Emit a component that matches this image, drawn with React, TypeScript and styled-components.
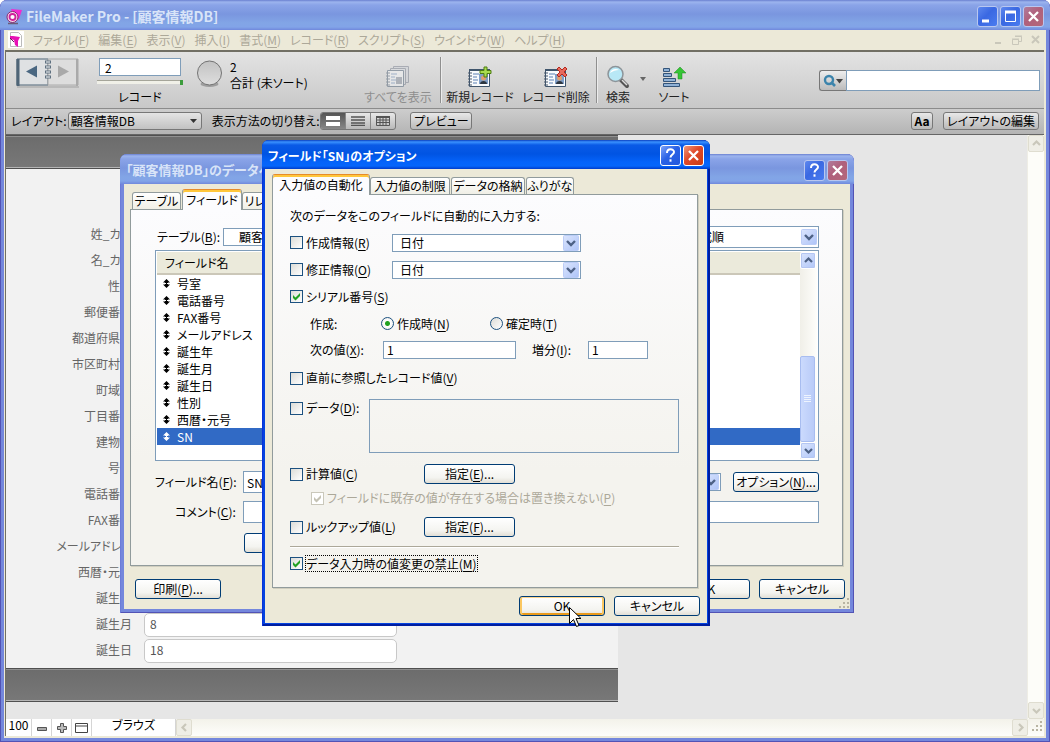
import React from "react";
import styled, { createGlobalStyle, css } from "styled-components";

const GlobalStyle = createGlobalStyle`
  * { box-sizing: border-box; }
  html, body { margin: 0; background: #fff; }
  body, button, input, select, textarea, table {
    font-family: "Noto Sans CJK JP", "Noto Sans", sans-serif;
    font-size: 12px;
    line-height: 16px;
    font-feature-settings: "palt";
    color: #000;
  }
  button, input, select, textarea { margin: 0; padding: 0; border-radius: 0; outline: none; }
  body { overflow: hidden; }
`;

const svgUrl = (w: number, h: number, body: string) =>
  `url("data:image/svg+xml,${encodeURIComponent(
    `<svg xmlns='http://www.w3.org/2000/svg' width='${w}' height='${h}' viewBox='0 0 ${w} ${h}'>${body}</svg>`
  )}")`;

const dropArrow = svgUrl(
  16,
  16,
  "<defs><linearGradient id='g' x2='1' y2='1'><stop stop-color='#dbe5fd'/><stop offset='1' stop-color='#aec4f8'/></linearGradient></defs><rect x='.5' y='.5' width='15' height='15' rx='1' fill='url(#g)' stroke='#bccdf7'/><path d='M4 6l4 4 4-4' fill='none' stroke='#4d6185' stroke-width='2.4'/>"
);
const greenCheck = svgUrl(11, 11, "<path d='M2 4l2.5 2.5L9 2v3L4.500 9.500 2 7z' fill='#21a121'/>");
const greyCheck = svgUrl(11, 11, "<path d='M2 4l2.5 2.5L9 2v3L4.500 9.500 2 7z' fill='#c4c2b4'/>");
const smallArrow = svgUrl(7, 4, "<path d='M0 0h7L3.500 4z' fill='#333'/>");

/* ---------- shared controls ---------- */

const Key = styled.span`
  text-decoration: underline;
  text-underline-offset: 2px;
`;

/* Underlines the access key written in brackets, e.g. "表示(V)". */
const Mnemonic = ({ text }: { text: string }) => {
  const m = text.match(/^(.*\()(\w)(\).*)$/);
  if (!m) return <>{text}</>;
  return (
    <span>
      {m[1]}
      <Key>{m[2]}</Key>
      {m[3]}
    </span>
  );
};

const PushButton = styled.button<{ $w?: number; $default?: boolean }>`
  width: ${(p) => p.$w ?? 86}px;
  height: 20px;
  flex: none;
  border: 1px solid #003c74;
  border-radius: 3px;
  background: linear-gradient(#fff, #f4f4f0 70%, #e2dfd6);
  line-height: 16px;
  white-space: nowrap;
  ${(p) => p.$default && css`box-shadow: inset 0 1px #fdd58c, inset 2px 0 #fbc761, inset -2px 0 #fbc761, inset 0 -2px #e99a1b;`}
`;

const TextInput = styled.input<{ $w?: number; $h?: number }>`
  ${(p) => (p.$w ? `width: ${p.$w}px;` : "flex: 1; min-width: 0;")}
  height: ${(p) => p.$h ?? 18}px;
  border: 1px solid #7f9db9;
  background: #fff;
  padding: 0 3px;
`;

const DropDown = styled.select<{ $w: number; $h?: number; $pad?: number }>`
  appearance: none;
  width: ${(p) => p.$w}px;
  height: ${(p) => p.$h ?? 18}px;
  flex: none;
  border: 1px solid #7f9db9;
  background: ${dropArrow} right 1px center no-repeat, #fff;
  padding: 0 20px 0 ${(p) => p.$pad ?? 7}px;
`;

const Tick = styled.input`
  appearance: none;
  width: 13px;
  height: 13px;
  flex: none;
  border: 1px solid #1c5180;
  background: linear-gradient(135deg, #dcdcd7, #fff);
  &:checked { background: ${greenCheck} center no-repeat, linear-gradient(135deg, #dcdcd7, #fff); }
  &:disabled { border-color: #cac8bb; background: ${greyCheck} center no-repeat, #fff; }
`;

const Radio = styled.input`
  appearance: none;
  width: 13px;
  height: 13px;
  flex: none;
  border: 1px solid #1c5180;
  border-radius: 50%;
  background: linear-gradient(135deg, #dcdcd7, #fff);
  &:checked { background: radial-gradient(circle, #21a121 0 2px, #fff 3px, #e8e8e4); }
`;

const Choice = styled.label<{ $w?: number; $muted?: boolean; $focus?: boolean }>`
  display: flex;
  align-items: center;
  gap: 3px;
  height: 18px;
  flex: none;
  white-space: nowrap;
  ${(p) => p.$w && `width: ${p.$w}px;`}
  ${(p) => p.$muted && "color: #aca899;"}
  ${(p) => p.$focus && "& > span { outline: 1px dotted #000; line-height: 15px; }"}
`;

const Caption = styled.label<{ $w?: number }>`
  flex: none;
  white-space: nowrap;
  ${(p) => p.$w && `width: ${p.$w}px;`}
`;

/* ---------- window chrome ---------- */

const TitleBar = styled.header<{ $active?: boolean; $h: number }>`
  height: ${(p) => p.$h}px;
  flex: none;
  display: flex;
  align-items: center;
  gap: 2px;
  padding: 2px 6px 0 6px;
  border-radius: 7px 7px 0 0;
  color: ${(p) => (p.$active ? "#fff" : "#d8e4f8")};
  background: ${(p) =>
    p.$active
      ? "linear-gradient(#0a3fc0 0, #3a92ff 2px, #0a5ae6 5px, #0054e3 14px, #0463fa 22px, #0566fb 26px, #003ccb 29px)"
      : "linear-gradient(#6a80d0 0, #9cb4ee 2px, #8aa4e8 5px, #7a96df 14px, #82a5e6 23px, #82a4e8 27px, #7088dc 30px)"};
`;

const TitleText = styled.h1<{ $size?: number }>`
  flex: 1;
  margin: 0;
  font-size: ${(p) => p.$size ?? 12}px;
  line-height: 20px;
  font-weight: 700;
  white-space: nowrap;
`;

const CaptionButton = styled.button<{ $tone: "blue" | "red"; $active?: boolean }>`
  width: 21px;
  height: 21px;
  flex: none;
  display: grid;
  place-items: center;
  border: 1px solid ${(p) => (p.$active ? "#fff" : "#b9c7f0")};
  border-radius: 3px;
  background: ${(p) =>
    p.$tone === "blue"
      ? p.$active
        ? "linear-gradient(135deg, #7ea4f8, #2a62e6 45%, #2458dc)"
        : "linear-gradient(135deg, #5e88ee, #3a68e2 45%, #4a7cf0)"
      : p.$active
        ? "linear-gradient(135deg, #f0987a, #e0492a 45%, #c93c14)"
        : "linear-gradient(135deg, #b07c9c, #b0607c 45%, #b4687a)"};
`;

const Glyph = ({ kind }: { kind: "min" | "max" | "close" | "help" }) => (
  <svg width="15" height="15" viewBox="0 0 15 15" fill="none" stroke="#fff">
    {kind === "min" && <path d="M2 12h7" strokeWidth="3" />}
    {kind === "max" && (
      <>
        <path d="M2 3h11" strokeWidth="3" />
        <path d="M2.500 3v9.500h10V3" />
      </>
    )}
    {kind === "close" && <path d="M3 3l9 9M12 3l-9 9" strokeWidth="2.300" />}
    {kind === "help" && (
      <>
        <path d="M4 5c0-5 7-4.500 7-1 0 2.500-3.500 2.500-3.500 5.500" strokeWidth="2" />
        <path d="M6.500 12.500h2" strokeWidth="2.400" />
      </>
    )}
  </svg>
);

const MainWindow = styled.div`
  position: relative;
  display: flex;
  flex-direction: column;
  min-height: 100vh;
  border-radius: 7px 7px 0 0;
  background: #7487dc;
  box-shadow: inset 1px 0 #5253b5, inset -1px 0 #5253b5, inset 0 -1px #5253b5;
  overflow: hidden;
`;

const MainBody = styled.div`
  flex: 1;
  display: flex;
  flex-direction: column;
  margin: 0 4px 4px;
  background: #ece9d8;
`;

const MenuBar = styled.nav`
  display: flex;
  align-items: center;
  gap: 9px;
  height: 19px;
  flex: none;
  padding: 0 4px;
`;

const MenuItem = styled.button`
  border: 0;
  background: none;
  color: #aca899;
  white-space: nowrap;
`;

const ChildControls = styled.div`
  display: flex;
  gap: 7px;
  margin-left: auto;
`;

const Client = styled.div`
  flex: 1;
  display: flex;
  flex-direction: column;
  margin: 1px 2px 2px 1px;
  border: 1px solid #716f64;
  border-width: 2px 0 0 1px;
`;

/* ---------- toolbar ---------- */

const Toolbar = styled.div`
  display: flex;
  align-items: flex-start;
  height: 57px;
  flex: none;
  padding: 5px 4px 0 10px;
  background: linear-gradient(#e3e3e3, #c8c8c8);
  border-bottom: 1px solid #8b8b8b;
`;

const BookButton = styled.button`
  width: 64px;
  height: 32px;
  flex: none;
  border: 0;
  background: none;
`;

const RecordBox = styled.div`
  display: flex;
  flex-direction: column;
  align-items: center;
  width: 88px;
  margin-left: 16px;
  padding-top: 1px;
`;

const RecordInput = styled(TextInput)`
  flex: none;
  padding-left: 5px;
`;

const Slider = styled.input`
  appearance: none;
  width: 86px;
  height: 4px;
  margin: 4px 0 5px;
  background: #f0f0e8;
  border-top: 1px solid #a5a59a;
  &::-webkit-slider-thumb {
    appearance: none;
    width: 3px;
    height: 5px;
    background: #3c9c3c;
  }
`;

const FoundSet = styled.div`
  display: flex;
  gap: 7px;
  margin: 2px 0 0 12px;
  width: 162px;
  white-space: nowrap;
`;

const ToolButton = styled.button<{ $w: number; $muted?: boolean }>`
  display: flex;
  flex-direction: column;
  align-items: center;
  width: ${(p) => p.$w}px;
  flex: none;
  padding-top: 8px;
  border: 0;
  background: none;
  white-space: nowrap;
  color: ${(p) => (p.$muted ? "#8e8e8e" : "#222")};
`;

const ToolRule = styled.span`
  width: 2px;
  height: 46px;
  flex: none;
  margin: 0 2px;
  background: linear-gradient(90deg, #8f8f8f 50%, #ececec 50%);
`;

const SearchBox = styled.div`
  display: flex;
  flex: none;
  width: 221px;
  margin: 13px 0 0 auto;
`;

const SearchMenu = styled.button`
  display: grid;
  place-items: center;
  width: 27px;
  height: 21px;
  border: 1px solid #777;
  border-right: 0;
  border-radius: 3px 0 0 3px;
  background: linear-gradient(#eee, #bbb);
`;

const LayoutBar = styled.div`
  display: flex;
  align-items: center;
  height: 26px;
  flex: none;
  padding: 0 5px 1px 5px;
  background: linear-gradient(#cdcdcd, #b4b4b4);
  border-bottom: 1px solid #666;
  white-space: nowrap;
`;

const metal = css`
  height: 18px;
  flex: none;
  border: 1px solid #777;
  border-radius: 3px;
  background: linear-gradient(#e8e8e8, #b9b9b9);
`;

const LayoutSelect = styled.select`
  ${metal}
  appearance: none;
  width: 134px;
  margin-left: 1px;
  padding: 0 16px 0 2px;
  background: ${smallArrow} right 4px center no-repeat, linear-gradient(#e4e4e4, #c2c2c2);
`;

const MetalButton = styled.button<{ $w: number }>`
  ${metal}
  width: ${(p) => p.$w}px;
  line-height: 16px;
  white-space: nowrap;
`;

const Segments = styled.div`
  ${metal}
  display: flex;
  width: 76px;
  overflow: hidden;
  margin: 0 14px 0 1px;
`;

const Segment = styled.button<{ $on?: boolean }>`
  flex: 1;
  display: grid;
  place-items: center;
  border: 0;
  border-right: 1px solid #888;
  background: ${(p) => (p.$on ? "linear-gradient(#555, #888)" : "none")};
  &:last-child { border-right: 0; }
`;

const Spacer = styled.span<{ $w?: number }>`
  ${(p) => (p.$w ? `width: ${p.$w}px; flex: none;` : "flex: 1;")}
`;

/* ---------- record form ---------- */

const Workspace = styled.div`
  flex: 1;
  display: flex;
  background: #e6e6e6;
`;

const Sheet = styled.main`
  width: 612px;
  display: flex;
  flex-direction: column;
  background: #e6e6e6;
`;

const Band = styled.div`
  height: 34px;
  flex: none;
  background: linear-gradient(#6c6c6c, #787878);
  border: 1px solid #505050;
  border-width: 1px 0;
  box-shadow: inset 0 -1px #b5b5b5, inset 0 1px #909090;
`;

const RecordForm = styled.form`
  flex: none;
  height: 499px;
  padding-top: 52px;
  background: #f2f2f2;
`;

const RecordRow = styled.label`
  display: flex;
  align-items: center;
  height: 26px;
  color: #666;
`;

const RecordLabel = styled.span`
  width: 126px;
  text-align: right;
  white-space: nowrap;
`;

const RecordField = styled.input`
  width: 253px;
  height: 24px;
  margin: 2px 0 0 12px;
  padding: 0 5px 4px;
  border: 1px solid #c8c8c8;
  border-radius: 5px;
  background: #fff;
  color: #555;
`;

const ScrollColumn = styled.div`
  display: flex;
  flex-direction: column;
  justify-content: space-between;
  width: 17px;
  margin-left: auto;
  background: #fdfdf9;
  border-left: 1px solid #eeede5;
`;

const ScrollEnd = styled.button<{ $blue?: boolean }>`
  display: grid;
  place-items: center;
  width: 16px;
  height: 17px;
  flex: none;
  border: 1px solid ${(p) => (p.$blue ? "#fff" : "#dfddd0")};
  border-radius: 2px;
  background: ${(p) => (p.$blue ? "linear-gradient(135deg, #dbe5fd, #b0c6f8)" : "#efeee6")};
  ${(p) => p.$blue && "box-shadow: inset 0 0 0 1px #b4c6f2;"}
`;

const Chevron = ({ dir, color = "#c9c7ba" }: { dir: "up" | "down" | "left" | "right"; color?: string }) => {
  const d = { up: "M2 7l3.500-3.500L9 7", down: "M2 4l3.500 3.500L9 4", left: "M7 2L3.500 5.500 7 9", right: "M4 2l3.500 3.500L4 9" }[dir];
  return (
    <svg width="11" height="11" viewBox="0 0 11 11">
      <path d={d} fill="none" stroke={color} strokeWidth="2.200" />
    </svg>
  );
};

const StatusBar = styled.footer`
  display: flex;
  height: 17px;
  flex: none;
  background: linear-gradient(#f3f2ea, #fefefb);
`;

const StatusCell = styled.button<{ $w: number; $text?: boolean }>`
  display: grid;
  place-items: ${(p) => (p.$text ? "start center" : "center")};
  width: ${(p) => p.$w}px;
  flex: none;
  border: 0;
  border-right: 1px solid #d5d5d5;
  background: #fff;
  line-height: 12px;
`;

const Grip = () => (
  <svg width="14" height="14" viewBox="0 0 14 14" fill="#b8b4a2">
    <path d="M10 2h2v2h-2zM6 6h2v2H6zM10 6h2v2h-2zM2 10h2v2H2zM6 10h2v2H6zM10 10h2v2h-2z" />
  </svg>
);

/* ---------- dialogs ---------- */

const Dialog = styled.section<{ $x: number; $y: number; $w: number; $active?: boolean }>`
  position: absolute;
  isolation: isolate;
  left: ${(p) => p.$x}px;
  top: ${(p) => p.$y}px;
  width: ${(p) => p.$w}px;
  border-radius: 7px 7px 0 0;
  background: ${(p) => (p.$active ? "#0443e0" : "#7487dc")};
  box-shadow: ${(p) =>
    p.$active
      ? "inset 1px 0 #0831d9, inset -2px 0 #001ea0, inset 0 -2px #001ea0"
      : "inset 1px 0 #6c7cd8, inset -1px 0 #5253b5, inset 0 -1px #5253b5"};
`;

const DialogBody = styled.div<{ $side: number; $pad: string }>`
  display: flow-root;
  margin: 0 ${(p) => p.$side}px;
  padding: ${(p) => p.$pad};
  background: #ece9d8;
`;

const DialogFoot = styled.div<{ $h: number }>`
  height: ${(p) => p.$h}px;
`;

const Tabs = styled.div`
  position: relative;
  z-index: 1;
  display: flex;
  align-items: flex-end;
  height: 20px;
  padding-left: 2px;
`;

const Tab = styled.button<{ $w: number; $on?: boolean }>`
  width: ${(p) => p.$w}px;
  height: ${(p) => (p.$on ? 21 : 17)}px;
  flex: none;
  border: 1px solid #919b9c;
  border-bottom: 0;
  border-radius: 3px 3px 0 0;
  background: linear-gradient(#fff, #f0efe6);
  white-space: nowrap;
  line-height: 16px;
  & + & { margin-left: 1px; }
  ${(p) =>
    p.$on &&
    css`
      && { margin: 0 -1px -1px -2px; }
      border-top: 1px solid #e68b2c;
      box-shadow: inset 0 2px #ffc73c;
      background: #fcfcfe;
    `}
`;

const Panel = styled.div<{ $h: number; $pad: string }>`
  min-height: ${(p) => p.$h}px;
  margin-right: 2px;
  padding: ${(p) => p.$pad};
  border: 1px solid #919b9c;
  background: linear-gradient(#fcfcfe, #f4f3ee 70%);
  box-shadow: 1px 1px #d0cebf;
`;

const Row = styled.div<{ $h: number; $indent?: number; $top?: boolean }>`
  display: flex;
  align-items: ${(p) => (p.$top ? "flex-start" : "center")};
  height: ${(p) => p.$h}px;
  padding-top: ${(p) => (p.$top ? 5 : 0)}px;
  padding-left: ${(p) => p.$indent ?? 0}px;
  white-space: nowrap;
`;

const Memo = styled.textarea`
  width: 310px;
  height: 54px;
  resize: none;
  border: 1px solid #7f9db9;
  background: transparent;
`;

const Divider = styled.hr`
  height: 2px;
  margin: 0;
  border: 0;
  border-top: 1px solid #aca899;
  background: #fff;
`;

const ButtonRow = styled.div<{ $pad: string }>`
  display: flex;
  gap: 9px;
  justify-content: flex-end;
  padding: ${(p) => p.$pad};
`;

const ListFrame = styled.div`
  display: flex;
  height: 211px;
  border: 1px solid #7f9db9;
  padding: 1px;
  background: #fff;
`;

const FieldTable = styled.table`
  flex: 1;
  align-self: flex-start;
  border-collapse: collapse;
  th {
    height: 22px;
    padding: 0 0 0 8px;
    text-align: left;
    font-weight: 400;
    background: #ebeadb;
    border-bottom: 2px solid #cbc7b8;
  }
  td { padding: 0; }
`;

const FieldRow = styled.tr<{ $on?: boolean }>`
  height: 17px;
  background: ${(p) => (p.$on ? "#316ac5" : "#fff")};
  color: ${(p) => (p.$on ? "#fff" : "#000")};
`;

const FieldCell = styled.div`
  display: flex;
  align-items: center;
  gap: 7px;
  height: 17px;
  padding-left: 6px;
`;

const ListScroll = styled.div`
  display: flex;
  flex-direction: column;
  width: 17px;
  background: linear-gradient(90deg, #f0efe8, #fefefb);
`;

const Thumb = styled.div`
  display: grid;
  place-items: center;
  width: 15px;
  height: 86px;
  margin-top: auto;
  border: 1px solid #a8bdf0;
  border-radius: 2px;
  background: linear-gradient(90deg, #cbdafd, #b9cbf8);
`;

const DialogGrip = styled.span`
  position: absolute;
  right: 3px;
  bottom: 3px;
  height: 14px;
`;

const Pointer = styled.svg`
  position: absolute;
  left: 569px;
  top: 607px;
`;

/* ---------- icons ---------- */

const AppIcon = () => (
  <svg width="18" height="17" viewBox="0 0 18 17">
    <path d="M5 1l11 1-3 9-4 2z" fill="#f22ad0" />
    <circle cx="6.500" cy="9" r="5.500" fill="#f6d9ee" stroke="#8a2870" />
    <circle cx="6.500" cy="9" r="3" fill="#fff" stroke="#d0219c" strokeWidth="1.800" />
    <path d="M2 15.500h10" stroke="#6b5a78" strokeWidth="1.500" />
  </svg>
);

const DocIcon = () => (
  <svg width="16" height="17" viewBox="0 0 16 17">
    <path d="M0 0h16v17H0z" fill="#fff" />
    <path d="M2.500 1.500h8l3 3v11h-11z" fill="#fff" stroke="#bbb" />
    <path d="M2 5h3l7 1-2 4v6l-3-2-1-5-4-1z" fill="#e712b4" />
    <path d="M2 7l4 4" stroke="#6a1160" />
  </svg>
);

const Book = () => (
  <svg width="64" height="32" viewBox="0 0 64 32">
    <path d="M1 29h62v2H1z" fill="#a8a8a8" opacity=".6" />
    <path d="M1 2h31v26H1z" fill="#dfe1e3" stroke="#4f6577" />
    <path d="M2 2v27" stroke="#4f6577" strokeWidth="3" />
    <path d="M32 2h30v26H32z" fill="#ddd" stroke="#aaa" />
    <path d="M61 2v27" stroke="#aaa" strokeWidth="2" />
    <path d="M10 14.500l11-6v12z" fill="#4a6781" />
    <path d="M53 14.500l-11-6v12z" fill="#a9a9a9" />
    <path d="M29 5h6M29 10h6M29 15h6M29 20h6" stroke="#5e7080" strokeWidth="3" />
    <path d="M30 5h4M30 10h4M30 15h4M30 20h4" stroke="#fff" />
  </svg>
);

const Pie = () => (
  <svg width="27" height="29" viewBox="0 0 27 29">
    <defs>
      <linearGradient id="pie" x2="0" y2="1">
        <stop stopColor="#c2c2c2" />
        <stop offset="1" stopColor="#dedede" />
      </linearGradient>
    </defs>
    <ellipse cx="13.500" cy="25" rx="9" ry="3" fill="#888" opacity=".7" />
    <circle cx="13.500" cy="14" r="12" fill="url(#pie)" stroke="#737373" />
  </svg>
);

const RecordIcon = ({ kind }: { kind: "all" | "new" | "delete" }) => (
  <svg width="26" height="24" viewBox="0 0 26 24" opacity={kind === "all" ? 0.45 : 1}>
    {kind === "all" && (
      <>
        <path d="M8.500 1.500h15v16h-15z" fill="#ccd0d8" stroke="#6c7484" />
        <path d="M5.500 3.500h15v16h-15z" fill="#d8dce2" stroke="#6c7484" />
      </>
    )}
    <path d={kind === "all" ? "M2.500 5.500h16v16h-16z" : "M2.500 4.500h20v17h-20z"} fill="#f8fafc" stroke="#3f556c" />
    {kind !== "all" && <path d="M2 5h21" stroke="#3f556c" strokeWidth="2" />}
    <path d="M1 8h4M1 11h4M1 14h4M1 17h4M1 20h4" stroke="#46566a" />
    <path d="M6 9h6M6 12h4M6 15h5M6 18h4" stroke="#8fa9cc" strokeWidth="1.500" />
    {kind === "all" ? (
      <path d="M11 12h6v7h-6z" fill="#7d8797" />
    ) : (
      <>
        <path d="M12 9h9v10h-9z" fill="#7f9fc8" />
        <circle cx="16.500" cy="13" r="2.500" fill="#e0a070" />
        <path d="M13 19c0-4 7-4 7 0z" fill="#2c3540" />
      </>
    )}
    {kind === "new" && <path d="M17 2h3v3.500h4v3h-4V12h-3V8.500h-4v-3h4z" fill="#a9dc4e" stroke="#4d7d12" />}
    {kind === "delete" && <path d="M14 4l2-2 3 3 3-3 2 2-3 3 3 3-2 2-3-3-3 3-2-2 3-3z" fill="#e86a5c" stroke="#b5281d" />}
  </svg>
);

const FindIcon = () => (
  <svg width="24" height="24" viewBox="0 0 24 24">
    <path d="M14 14l7 7" stroke="#555" strokeWidth="4" strokeLinecap="round" />
    <path d="M16 15l5 5" stroke="#ddd" strokeWidth="1.500" />
    <circle cx="9.500" cy="9" r="7.500" fill="#b8e8f6" stroke="#8d9499" strokeWidth="1.500" />
    <path d="M4 8c1-4 6-5 9-3-3 0-6 1-9 3z" fill="#fff" />
  </svg>
);

const SortIcon = () => (
  <svg width="26" height="24" viewBox="0 0 26 24">
    <g fill="#8fb1d6" stroke="#34557a">
      <path d="M2.500 3.500h6v3h-6zM2.500 8.500h8v3h-8zM2.500 13.500h12v3h-12zM2.500 18.500h16v3h-16z" />
    </g>
    <path d="M19 2l6 6h-4v6h-4V8h-4z" fill="#35c435" stroke="#1d8a1d" strokeWidth=".5" />
  </svg>
);

const menus = ["ファイル(F)", "編集(E)", "表示(V)", "挿入(I)", "書式(M)", "レコード(R)", "スクリプト(S)", "ウインドウ(W)", "ヘルプ(H)"];

const recordFields: [string, string][] = [
  ["姓_カナ", ""], ["名_カナ", ""], ["性別", ""], ["郵便番号", ""], ["都道府県名", ""], ["市区町村名", ""],
  ["町域名", ""], ["丁目番地", ""], ["建物名", ""], ["号室", ""], ["電話番号", ""], ["FAX番号", ""],
  ["メールアドレス", ""], ["西暦・元号", ""], ["誕生年", ""], ["誕生月", "8"], ["誕生日", "18"],
];

const dbFields = ["号室", "電話番号", "FAX番号", "メールアドレス", "誕生年", "誕生月", "誕生日", "性別", "西暦・元号", "SN"];

const DatabaseDialog = () => (
  <Dialog $x={120} $y={154} $w={734}>
    <TitleBar $h={30}>
      <TitleText $size={13}>「顧客情報DB」のデータベースの管理</TitleText>
      <CaptionButton $tone="blue" aria-label="ヘルプ"><Glyph kind="help" /></CaptionButton>
      <CaptionButton $tone="red" aria-label="閉じる"><Glyph kind="close" /></CaptionButton>
    </TitleBar>
    <DialogBody $side={4} $pad="5px 5px 0 6px">
      <Tabs>
        <Tab $w={49}>テーブル</Tab>
        <Tab $w={60} $on>フィールド</Tab>
        <Tab $w={68}>リレーション</Tab>
      </Tabs>
      <Panel $h={357} $pad="13px 23px 0 24px">
        <Row $h={27} $indent={2}>
          <Caption $w={66} htmlFor="table"><Mnemonic text="テーブル(B):" /></Caption>
          <DropDown id="table" $w={200} $pad={15}><option>顧客情報DB</option></DropDown>
          <Spacer />
          <DropDown aria-label="表示順" $w={148} $h={22} $pad={16}><option>作成順</option></DropDown>
        </Row>
        <ListFrame>
          <FieldTable>
            <thead><tr><th>フィールド名</th></tr></thead>
            <tbody>
              {dbFields.map((f) => (
                <FieldRow key={f} $on={f === "SN"}>
                  <td>
                    <FieldCell>
                      <svg width="7" height="9" viewBox="0 0 7 9" fill="currentColor">
                        <path d="M3.500 0L7 3.500H5v2h2L3.500 9 0 5.500h2v-2H0z" />
                        <path d="M0 4h7v1H0z" fill={f === "SN" ? "#316ac5" : "#fff"} />
                        <path d="M3 2h1v5H3z" />
                      </svg>
                      {f}
                    </FieldCell>
                  </td>
                </FieldRow>
              ))}
            </tbody>
          </FieldTable>
          <ListScroll>
            <ScrollEnd $blue aria-label="上へ"><Chevron dir="up" color="#4d6185" /></ScrollEnd>
            <Thumb>
              <svg width="7" height="8" viewBox="0 0 7 8"><path d="M0 .5h7M0 2.500h7M0 4.500h7M0 6.500h7" stroke="#eef4fe" /></svg>
            </Thumb>
            <ScrollEnd $blue aria-label="下へ"><Chevron dir="down" color="#4d6185" /></ScrollEnd>
          </ListScroll>
        </ListFrame>
        <Row $h={42}>
          <Caption $w={88} htmlFor="fieldname"><Mnemonic text="フィールド名(F):" /></Caption>
          <TextInput id="fieldname" $w={220} $h={22} defaultValue="SN" />
          <Spacer />
          <DropDown aria-label="タイプ" $w={140}><option>数字</option></DropDown>
          <Spacer $w={12} />
          <PushButton $w={86}><Mnemonic text="オプション(N)..." /></PushButton>
        </Row>
        <Row $h={18} $indent={20}>
          <Caption $w={68} htmlFor="comment"><Mnemonic text="コメント(C):" /></Caption>
          <TextInput id="comment" $h={22} />
        </Row>
        <Row $h={44} $indent={89}>
          <PushButton><Mnemonic text="作成(E)" /></PushButton>
        </Row>
      </Panel>
      <ButtonRow $pad="13px 0 10px 5px">
        <PushButton><Mnemonic text="印刷(P)..." /></PushButton>
        <Spacer />
        <PushButton>OK</PushButton>
        <PushButton>キャンセル</PushButton>
      </ButtonRow>
    </DialogBody>
    <DialogFoot $h={4} />
    <DialogGrip><Grip /></DialogGrip>
  </Dialog>
);

const OptionsDialog = () => (
  <Dialog $x={262} $y={140} $w={448} $active>
    <TitleBar $h={29} $active>
      <TitleText>フィールド「SN」のオプション</TitleText>
      <CaptionButton $tone="blue" $active aria-label="ヘルプ"><Glyph kind="help" /></CaptionButton>
      <CaptionButton $tone="red" $active aria-label="閉じる"><Glyph kind="close" /></CaptionButton>
    </TitleBar>
    <DialogBody $side={3} $pad="5px 7px 7px 7px">
      <Tabs>
        <Tab $w={98} $on>入力値の自動化</Tab>
        <Tab $w={80}>入力値の制限</Tab>
        <Tab $w={74}>データの格納</Tab>
        <Tab $w={48}>ふりがな</Tab>
      </Tabs>
      <Panel $h={394} $pad="8px 18px 0 17px">
        <Row $h={26}>次のデータをこのフィールドに自動的に入力する:</Row>
        <Row $h={27}>
          <Choice $w={102}><Tick type="checkbox" /><Mnemonic text="作成情報(R)" /></Choice>
          <DropDown aria-label="作成情報" $w={189}><option>日付</option></DropDown>
        </Row>
        <Row $h={27}>
          <Choice $w={102}><Tick type="checkbox" /><Mnemonic text="修正情報(O)" /></Choice>
          <DropDown aria-label="修正情報" $w={189}><option>日付</option></DropDown>
        </Row>
        <Row $h={27}>
          <Choice><Tick type="checkbox" defaultChecked /><Mnemonic text="シリアル番号(S)" /></Choice>
        </Row>
        <Row $h={27} $indent={20}>
          <Caption as="span" $w={71}>作成:</Caption>
          <Choice $w={109}><Radio type="radio" name="when" defaultChecked /><Mnemonic text="作成時(N)" /></Choice>
          <Choice><Radio type="radio" name="when" /><Mnemonic text="確定時(T)" /></Choice>
        </Row>
        <Row $h={25} $indent={20}>
          <Caption $w={73} htmlFor="next"><Mnemonic text="次の値(X):" /></Caption>
          <TextInput id="next" $w={133} defaultValue="1" />
          <Spacer $w={16} />
          <Caption $w={56} htmlFor="step"><Mnemonic text="増分(I):" /></Caption>
          <TextInput id="step" $w={60} defaultValue="1" />
        </Row>
        <Row $h={32}>
          <Choice><Tick type="checkbox" /><Mnemonic text="直前に参照したレコード値(V)" /></Choice>
        </Row>
        <Row $h={66} $top>
          <Choice $w={79}><Tick type="checkbox" /><Mnemonic text="データ(D):" /></Choice>
          <Memo aria-label="データ" />
        </Row>
        <Row $h={28}>
          <Choice $w={134}><Tick type="checkbox" /><Mnemonic text="計算値(C)" /></Choice>
          <PushButton $w={91}><Mnemonic text="指定(E)..." /></PushButton>
        </Row>
        <Row $h={20} $indent={21}>
          <Choice $muted><Tick type="checkbox" defaultChecked disabled /><Mnemonic text="フィールドに既存の値が存在する場合は置き換えない(P)" /></Choice>
        </Row>
        <Row $h={38}>
          <Choice $w={134}><Tick type="checkbox" /><Mnemonic text="ルックアップ値(L)" /></Choice>
          <PushButton $w={91}><Mnemonic text="指定(F)..." /></PushButton>
        </Row>
        <Divider />
        <Row $h={30}>
          <Choice $focus><Tick type="checkbox" defaultChecked /><Mnemonic text="データ入力時の値変更の禁止(M)" /></Choice>
        </Row>
      </Panel>
      <ButtonRow $pad="8px 0 0">
        <PushButton $default>OK</PushButton>
        <PushButton>キャンセル</PushButton>
      </ButtonRow>
    </DialogBody>
    <DialogFoot $h={3} />
  </Dialog>
);

export default function App() {
  return (
    <>
      <GlobalStyle />
      <MainWindow>
        <TitleBar $h={30}>
          <AppIcon />
          <TitleText $size={14}>FileMaker Pro - [顧客情報DB]</TitleText>
          <CaptionButton $tone="blue" aria-label="最小化"><Glyph kind="min" /></CaptionButton>
          <CaptionButton $tone="blue" aria-label="最大化"><Glyph kind="max" /></CaptionButton>
          <CaptionButton $tone="red" aria-label="閉じる"><Glyph kind="close" /></CaptionButton>
        </TitleBar>
        <MainBody>
          <MenuBar>
            <DocIcon />
            {menus.map((m) => <MenuItem key={m}><Mnemonic text={m} /></MenuItem>)}
            <ChildControls>
              <svg width="12" height="12" viewBox="0 0 12 12"><path d="M3 9h6" stroke="#c9c7ba" strokeWidth="2" /></svg>
              <svg width="12" height="12" viewBox="0 0 12 12" fill="none" stroke="#c9c7ba"><path d="M1.500 5.500h6v5h-6zM4 2.500h6.500v5H8M1 5h7M4 2h7" /></svg>
              <svg width="12" height="12" viewBox="0 0 12 12"><path d="M2 2l7 7M9 2l-7 7" stroke="#c9c7ba" strokeWidth="2" /></svg>
            </ChildControls>
          </MenuBar>
          <Client>
            <Toolbar>
              <BookButton aria-label="前後のレコード"><Book /></BookButton>
              <RecordBox>
                <RecordInput id="record" $w={82} defaultValue="2" />
                <Slider type="range" min={1} max={2} defaultValue={2} aria-label="レコード位置" />
                <label htmlFor="record">レコード</label>
              </RecordBox>
              <FoundSet><Pie /><span>2<br />合計 (未ソート)</span></FoundSet>
              <ToolButton $w={80} $muted><RecordIcon kind="all" />すべてを表示</ToolButton>
              <ToolRule />
              <ToolButton $w={72}><RecordIcon kind="new" />新規レコード</ToolButton>
              <Spacer $w={4} />
              <ToolButton $w={72}><RecordIcon kind="delete" />レコード削除</ToolButton>
              <Spacer $w={2} />
              <ToolRule />
              <ToolButton $w={36}><FindIcon />検索</ToolButton>
              <svg width="20" height="30" viewBox="0 0 20 30"><path d="M4 20h6l-3 4z" fill="#666" /></svg>
              <ToolButton $w={36}><SortIcon />ソート</ToolButton>
              <SearchBox>
                <SearchMenu aria-label="検索メニュー">
                  <svg width="22" height="16" viewBox="0 0 22 16">
                    <circle cx="7" cy="7" r="4" fill="none" stroke="#3c84ac" strokeWidth="2.400" />
                    <path d="M9 9l4 4" stroke="#3c84ac" strokeWidth="2.600" />
                    <path d="M14 6h7l-3.500 4.500z" fill="#444" />
                  </svg>
                </SearchMenu>
                <TextInput $h={21} aria-label="クイック検索" />
              </SearchBox>
            </Toolbar>
            <LayoutBar>
              <label htmlFor="layout">レイアウト:</label>
              <LayoutSelect id="layout"><option>顧客情報DB</option></LayoutSelect>
              <Spacer $w={10} />
              <span>表示方法の切り替え:</span>
              <Segments>
                <Segment $on aria-label="フォーム形式"><svg width="14" height="10"><path d="M0 0h14v4H0zM0 6h14v4H0z" fill="#fff" /></svg></Segment>
                <Segment aria-label="リスト形式"><svg width="14" height="10"><path d="M0 1h14M0 4h14M0 7h14M0 9.500h14" stroke="#555" strokeWidth="1.500" /></svg></Segment>
                <Segment aria-label="表形式"><svg width="14" height="10" fill="none" stroke="#555"><path d="M.5 1h13v8.500H.5zM0 4h14M0 6.500h14M4 1v9M7 1v9M10 1v9" /><path d="M0 1h14" strokeWidth="2" /></svg></Segment>
              </Segments>
              <MetalButton $w={62}>プレビュー</MetalButton>
              <Spacer />
              <MetalButton $w={22} aria-label="書式設定バー"><b>Aa</b></MetalButton>
              <Spacer $w={10} />
              <MetalButton $w={96}>レイアウトの編集</MetalButton>
            </LayoutBar>
            <Workspace>
              <Sheet>
                <Band />
                <RecordForm>
                  {recordFields.map(([label, value]) => (
                    <RecordRow key={label}>
                      <RecordLabel>{label}</RecordLabel>
                      <RecordField defaultValue={value} />
                    </RecordRow>
                  ))}
                </RecordForm>
                <Band />
              </Sheet>
              <ScrollColumn>
                <ScrollEnd aria-label="上へスクロール"><Chevron dir="up" /></ScrollEnd>
                <ScrollEnd aria-label="下へスクロール"><Chevron dir="down" /></ScrollEnd>
              </ScrollColumn>
            </Workspace>
            <StatusBar>
              <StatusCell $w={26} $text>100</StatusCell>
              <StatusCell $w={20} aria-label="縮小"><svg width="12" height="12"><path d="M1.500 5.500h9v3h-9z" fill="#aaa" stroke="#555" /></svg></StatusCell>
              <StatusCell $w={20} aria-label="拡大"><svg width="12" height="12"><path d="M4.500 1.500h3v3h3v3h-3v3h-3v-3h-3v-3h3z" fill="#bbb" stroke="#555" /></svg></StatusCell>
              <StatusCell $w={20} aria-label="ステータスツールバー"><svg width="13" height="11"><path d="M.5 1.500h12v9H.5zM0 4h13" fill="#fff" stroke="#444" /></svg></StatusCell>
              <StatusCell $w={84} $text>ブラウズ</StatusCell>
              <ScrollEnd aria-label="左へスクロール"><Chevron dir="left" /></ScrollEnd>
              <Spacer />
              <ScrollEnd aria-label="右へスクロール"><Chevron dir="right" /></ScrollEnd>
              <Spacer $w={2} />
              <Grip />
            </StatusBar>
          </Client>
        </MainBody>
        <DatabaseDialog />
        <OptionsDialog />
        <Pointer width="13" height="21" viewBox="0 0 13 21">
          <path d="M.5.5v16l4-4 3 7 2.500-1-3-7h5z" fill="#fff" stroke="#000" />
        </Pointer>
      </MainWindow>
    </>
  );
}
